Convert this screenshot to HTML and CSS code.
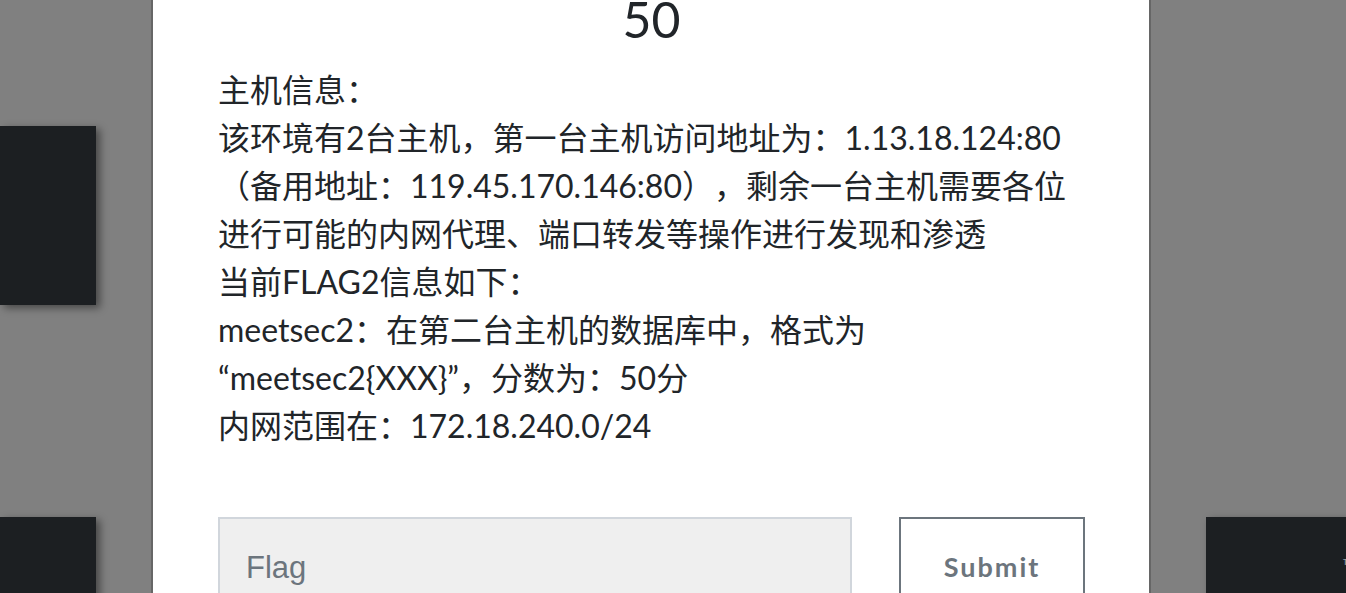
FILE: index.html
```html
<!DOCTYPE html>
<html lang="zh">
<head>
<meta charset="utf-8">
<title>Challenge</title>
<link rel="stylesheet" href="styles.css">
</head>
<body>
<div class="page">
  <div class="col col-left">
    <div class="card card-a"></div>
    <div class="card card-b"></div>
  </div>
  <div class="col col-right">
    <div class="card card-c"><span class="card-label">T</span></div>
  </div>
</div>

<div class="modal">
  <h2 class="value">50</h2>
  <div class="desc">
    <p>主机信息：</p>
    <p>该环境有2台主机，第一台主机访问地址为：1.13.18.124:80（备用地址：119.45.170.146:80），剩余一台主机需要各位进行可能的内网代理、端口转发等操作进行发现和渗透</p>
    <p>当前FLAG2信息如下：</p>
    <p>meetsec2：在第二台主机的数据库中，格式为“meetsec2{XXX}”，分数为：50分</p>
    <p>内网范围在：172.18.240.0/24</p>
  </div>
  <form class="flag-form">
    <input class="flag-input" type="text" placeholder="Flag">
    <button class="submit-btn" type="button">Submit</button>
  </form>
</div>
</body>
</html>
```

FILE: styles.css
```css
html, body {
  margin: 0;
  padding: 0;
}

body {
  width: 1346px;
  height: 593px;
  overflow: hidden;
  background: #808080;
  position: relative;
  font-family: "Lato", "Noto Sans CJK SC", sans-serif;
}

.page {
  display: flex;
  justify-content: space-between;
  height: 593px;
}

.col {
  display: flex;
  flex-direction: column;
}

.col-left {
  width: 96px;
  padding-top: 126px;
  gap: 212px;
}

.col-right {
  width: 140px;
  padding-top: 517px;
}

.card {
  flex-shrink: 0;
  background: #1c1f22;
  box-shadow: 4px 3px 8px rgba(0, 0, 0, 0.45);
}

.card-a {
  height: 179px;
}

.card-b,
.card-c {
  height: 120px;
}

.card-label {
  display: block;
  padding: 40px 0 0 137px;
  color: #9a9ea2;
  font-size: 8px;
  font-weight: 700;
}

.modal {
  position: absolute;
  left: 151px;
  top: -41px;
  width: 1000px;
  box-sizing: border-box;
  background: #fff;
  border-left: 2px solid #666666;
  border-right: 2px solid #666666;
  padding: 30px 64px 40px 65px;
  color: #212529;
}

.value {
  margin: 0;
  text-align: center;
  font-weight: 400;
  font-size: 50px;
  line-height: 1.2;
}

.desc {
  margin-top: 17px;
  font-size: 32px;
  line-height: 48px;
  text-spacing-trim: space-all;
}

.desc p {
  margin: 0;
}

.flag-form {
  margin-top: 67px;
  display: grid;
  grid-template-columns: 634px 186px;
  column-gap: 47px;
}

.flag-input {
  box-sizing: border-box;
  height: 104px;
  margin: 0;
  padding: 0 26px 2px;
  background: #efefef;
  border: 2px solid #d1d6dc;
  border-radius: 0;
  font-family: "Liberation Sans", Arial, sans-serif;
  font-size: 31px;
  color: #495057;
  outline: none;
}

.flag-input::placeholder {
  color: #6c757d;
  opacity: 1;
}

.submit-btn {
  box-sizing: border-box;
  height: 104px;
  margin: 0;
  padding: 0 0 6px;
  background: #fff;
  border: 2px solid #6c757d;
  border-radius: 0;
  font-family: "Lato", sans-serif;
  font-weight: 700;
  font-size: 27px;
  letter-spacing: 2px;
  color: #6c757d;
}
```
